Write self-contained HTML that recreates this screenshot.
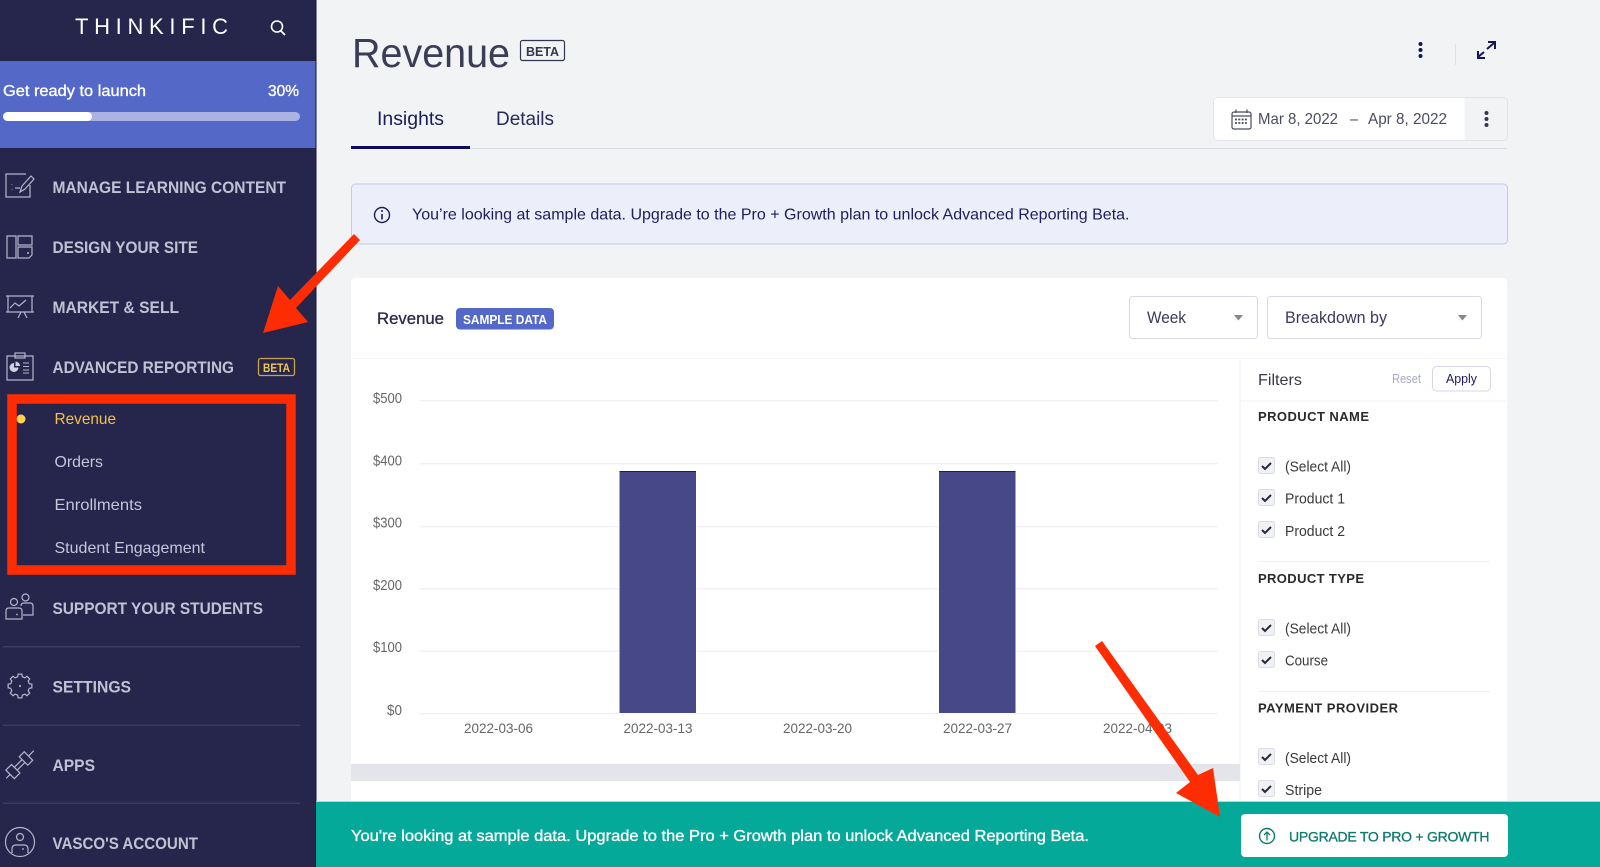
<!DOCTYPE html>
<html lang="en">
<head>
<meta charset="utf-8">
<title>Revenue</title>
<style>
html,body{margin:0;padding:0;width:1600px;height:867px;overflow:hidden;background:#f2f3f5}
svg{display:block}
text{font-family:"Liberation Sans",sans-serif}
.nav{font-size:17px;font-weight:bold;fill:#c0c2d4}
.sub{font-size:16px;fill:#c4c6da}
.cb{font-size:14.5px;fill:#3a3a3a}
.fh{font-size:13px;font-weight:bold;fill:#2a2a2a}
.yl{font-size:14.5px;fill:#666}
.xl{font-size:14px;fill:#666}
.ic{fill:none;stroke:#b4b6ca;stroke-width:1.2}
.box{fill:#f0f1f5;stroke:#dcdde3;stroke-width:1}
.chk{fill:none;stroke:#26283a;stroke-width:2}
</style>
</head>
<body>
<svg width="1600" height="867" viewBox="0 0 1600 867" xmlns="http://www.w3.org/2000/svg">
<rect width="1600" height="867" fill="#f2f3f5"/>

<!-- Sidebar -->
<rect width="316" height="867" fill="#26264c"/>
<rect x="315.500" width="1" height="867" fill="#16163c"/>
<text x="75" y="34" font-size="22" fill="#fff" textLength="153" lengthAdjust="spacing">THINKIFIC</text>
<circle cx="277" cy="26.500" r="5.500" fill="none" stroke="#fff" stroke-width="1.600"/>
<path d="M281 31L285 35" stroke="#fff" stroke-width="1.800" fill="none"/>
<rect y="61" width="315.500" height="87" fill="#5468c8"/>
<text x="3" y="96" font-size="16" fill="#fff" stroke="#fff" stroke-width=".35" textLength="143" lengthAdjust="spacingAndGlyphs">Get ready to launch</text>
<text x="268" y="96" font-size="16" fill="#fff" stroke="#fff" stroke-width=".35" textLength="31" lengthAdjust="spacingAndGlyphs">30%</text>
<rect x="3" y="112" width="297" height="9" rx="4.500" fill="#aab3e2"/>
<rect x="3" y="112" width="89" height="9" rx="4.500" fill="#fff"/>

<path class="ic" d="M26 174H6V197H30V185M12 184.500v.6M12 189.500v.6M15 188H20M20 192L22 186L31 176L34 179L25 189Z"/>
<text class="nav" x="52.500" y="193" textLength="233.500" lengthAdjust="spacingAndGlyphs">MANAGE LEARNING CONTENT</text>
<path class="ic" d="M7 236H16V258H7ZM18 236H32V245H18ZM18 247H32V255L29 258H18Z"/><circle cx="28" cy="253" r="1" fill="#b4b6ca"/>
<text class="nav" x="52.500" y="253" textLength="145.500" lengthAdjust="spacingAndGlyphs">DESIGN YOUR SITE</text>
<path class="ic" d="M6 296H34M8 296V312M32 296V312M6 312H34M18 318L21 312M27 318L24 312M10 308L15 303L19 306L26 300"/>
<text class="nav" x="52.500" y="313" textLength="126.500" lengthAdjust="spacingAndGlyphs">MARKET &amp; SELL</text>
<path class="ic" d="M7 356H33V380H7Z"/><rect class="ic" x="15" y="353" width="10" height="5"/>
<path d="M14 363A4.500 4.500 0 1 0 18.500 367.500H14Z" fill="#d0d2e0"/><path d="M15.500 361.500A4.500 4.500 0 0 1 20 366H15.500Z" fill="#d0d2e0"/><path d="M23 363H29M23 366.500H29M23 370H29M23 373H29" stroke="#b4b6ca" stroke-width="1"/>
<text class="nav" x="52.500" y="373" textLength="181.500" lengthAdjust="spacingAndGlyphs">ADVANCED REPORTING</text>
<rect x="258.500" y="358.500" width="36" height="17" rx="2" fill="none" stroke="#c6a350" stroke-width="1.300"/>
<text x="263" y="372" font-size="11.500" font-weight="bold" fill="#f5c84a" textLength="27" lengthAdjust="spacingAndGlyphs">BETA</text>

<circle cx="21" cy="419" r="4.500" fill="#ffd254"/>
<text x="54.500" y="424" font-size="16" fill="#f2c14e" textLength="61.500" lengthAdjust="spacingAndGlyphs">Revenue</text>
<text class="sub" x="54.500" y="467" textLength="48.500" lengthAdjust="spacingAndGlyphs">Orders</text>
<text class="sub" x="54.500" y="510" textLength="87.500" lengthAdjust="spacingAndGlyphs">Enrollments</text>
<text class="sub" x="54.500" y="553" textLength="150.500" lengthAdjust="spacingAndGlyphs">Student Engagement</text>
<rect x="12" y="399" width="279" height="171" fill="none" stroke="#fe2c02" stroke-width="9.500"/>

<circle class="ic" cx="14" cy="602" r="3.500"/><circle class="ic" cx="25.500" cy="597.500" r="3.500"/>
<path class="ic" d="M6 619V611Q6 608 9 608H19Q22 608 22 611V619ZM21 606Q21 603 24 603H30Q33 603 33 606V615H23"/><circle cx="17" cy="614.500" r=".9" fill="#b4b6ca"/>
<text class="nav" x="52.500" y="614" textLength="210.500" lengthAdjust="spacingAndGlyphs">SUPPORT YOUR STUDENTS</text>
<rect x="3" y="646" width="297" height="1.500" fill="#3b3b62"/>
<g transform="translate(20 686)"><polygon class="ic" points="-2.300,-9.220 -1.880,-11.850 1.880,-11.850 2.300,-9.220 4.890,-8.140 7.050,-9.710 9.710,-7.050 8.140,-4.890 9.220,-2.300 11.850,-1.880 11.850,1.880 9.220,2.300 8.140,4.890 9.710,7.050 7.050,9.710 4.890,8.140 2.300,9.220 1.880,11.850 -1.880,11.850 -2.300,9.220 -4.890,8.140 -7.050,9.710 -9.710,7.050 -8.140,4.890 -9.220,2.300 -11.850,1.880 -11.850,-1.880 -9.220,-2.300 -8.140,-4.890 -9.710,-7.050 -7.050,-9.710 -4.890,-8.140"/><circle r="1" fill="#c8cad8"/></g>
<text class="nav" x="52.500" y="692.500" textLength="78.500" lengthAdjust="spacingAndGlyphs">SETTINGS</text>
<rect x="3" y="724.500" width="297" height="1.500" fill="#3b3b62"/>
<g transform="rotate(-45 20 764.500)"><rect class="ic" x="6" y="758.500" width="8" height="12"/><rect class="ic" x="25" y="758.500" width="7" height="12"/><path class="ic" d="M.5 764.500H6M14 762.500H25M14 766.500H25M32 764.500H39.500"/></g>
<text class="nav" x="52.500" y="771" textLength="42.500" lengthAdjust="spacingAndGlyphs">APPS</text>
<rect x="3" y="802.500" width="297" height="1.500" fill="#3b3b62"/>
<circle class="ic" cx="20" cy="842" r="14.500"/><circle class="ic" cx="20" cy="837" r="3.500"/>
<path class="ic" d="M12 853V849Q12 845 16 845H24Q28 845 28 849V853"/><circle cx="23" cy="849" r=".9" fill="#b4b6ca"/>
<text class="nav" x="52.500" y="849" textLength="145.500" lengthAdjust="spacingAndGlyphs">VASCO'S ACCOUNT</text>

<!-- Header -->
<text x="352" y="67" font-size="41" fill="#3a3d55" textLength="158" lengthAdjust="spacingAndGlyphs">Revenue</text>
<rect x="520.500" y="40.500" width="44" height="20" rx="2" fill="none" stroke="#33364f" stroke-width="1.200"/>
<text x="526" y="56" font-size="12.500" font-weight="bold" fill="#33364f" textLength="33" lengthAdjust="spacingAndGlyphs">BETA</text>
<circle cx="1420.500" cy="44" r="2" fill="#16145e"/><circle cx="1420.500" cy="50" r="2" fill="#16145e"/><circle cx="1420.500" cy="56" r="2" fill="#16145e"/>
<rect x="1455" y="44" width="1" height="21" fill="#e0e1e7"/>
<path d="M1487 49L1494 43M1488 42H1495V49M1484 52L1478 57M1478 51V58H1485" fill="none" stroke="#16145e" stroke-width="2"/>

<text x="377" y="125" font-size="19.500" fill="#1c1c58" textLength="67" lengthAdjust="spacingAndGlyphs">Insights</text>
<text x="496" y="125" font-size="19.500" fill="#2a2a58" textLength="58" lengthAdjust="spacingAndGlyphs">Details</text>
<rect x="351" y="148" width="1156" height="1" fill="#d9dbe5"/>
<rect x="351" y="146" width="119" height="3" fill="#0e0b5e"/>

<rect x="1213.500" y="97.500" width="294" height="43" rx="4" fill="#f2f3f5" stroke="#e3e4ea"/>
<path d="M1217.500 98H1464.500V140H1217.500Q1214 140 1214 136.500V101.500Q1214 98 1217.500 98Z" fill="#fff"/>
<rect x="1232" y="112" width="19" height="17" rx="2" fill="none" stroke="#4a4c60" stroke-width="1.200"/>
<path d="M1232 116H1251M1236 109.500V113M1247 109.500V113" stroke="#4a4c60" stroke-width="1.200" fill="none"/>
<path d="M1235 119.500H1248M1235 123H1248" stroke="#4a4c60" stroke-width="1.800" stroke-dasharray="2 1.300" fill="none"/>
<text x="1258" y="124" font-size="16" fill="#4a4c60" textLength="80" lengthAdjust="spacingAndGlyphs">Mar 8, 2022</text>
<text x="1350" y="124" font-size="16" fill="#4a4c60" textLength="8" lengthAdjust="spacingAndGlyphs">–</text>
<text x="1368" y="124" font-size="16" fill="#4a4c60" textLength="79" lengthAdjust="spacingAndGlyphs">Apr 8, 2022</text>
<circle cx="1486.500" cy="113" r="2" fill="#33364f"/><circle cx="1486.500" cy="119" r="2" fill="#33364f"/><circle cx="1486.500" cy="125" r="2" fill="#33364f"/>

<!-- Banner -->
<rect x="351.500" y="184" width="1156" height="60" rx="4" fill="#eceef9" stroke="#c4c9e8"/>
<circle cx="382" cy="215" r="7.500" fill="none" stroke="#1c1c58" stroke-width="1.400"/>
<path d="M382 214V219.500" stroke="#1c1c58" stroke-width="1.600"/><circle cx="382" cy="211" r="1" fill="#1c1c58"/>
<text x="412" y="219.500" font-size="16" fill="#1e1e5c" textLength="717.500" lengthAdjust="spacingAndGlyphs">You’re looking at sample data. Upgrade to the Pro + Growth plan to unlock Advanced Reporting Beta.</text>

<!-- Card -->
<rect x="351" y="278" width="1156" height="540" rx="4" fill="#fff"/>
<text x="377" y="324" font-size="16.500" fill="#2a2a45" stroke="#2a2a45" stroke-width=".3" textLength="67" lengthAdjust="spacingAndGlyphs">Revenue</text>
<rect x="456" y="308" width="98" height="21.500" rx="4" fill="#5468c8"/>
<text x="463" y="324" font-size="12.500" font-weight="bold" fill="#fff" textLength="84" lengthAdjust="spacingAndGlyphs">SAMPLE DATA</text>

<rect x="1129.500" y="296.500" width="128" height="42" rx="3" fill="#fff" stroke="#d9d9e6"/>
<text x="1147" y="323" font-size="16.500" fill="#3a3a5a" textLength="39" lengthAdjust="spacingAndGlyphs">Week</text>
<path d="M1234 315H1243L1238.500 320.500Z" fill="#888"/>
<rect x="1267.500" y="296.500" width="214" height="42" rx="3" fill="#fff" stroke="#d9d9e6"/>
<text x="1285" y="323" font-size="16.500" fill="#3a3a5a" textLength="102" lengthAdjust="spacingAndGlyphs">Breakdown by</text>
<path d="M1458 315H1467L1462.500 320.500Z" fill="#888"/>

<rect x="351" y="358" width="1156" height="1" fill="#f6f6f8"/>
<rect x="1239.500" y="358" width="1" height="450" fill="#f0f0f3"/>

<!-- Chart -->
<g fill="#f0f0f2">
<rect x="419.500" y="400" width="798" height="1.300"/><rect x="419.500" y="463" width="798" height="1.300"/><rect x="419.500" y="526" width="798" height="1.300"/><rect x="419.500" y="588" width="798" height="1.300"/><rect x="419.500" y="650.500" width="798" height="1.300"/><rect x="419.500" y="713" width="798" height="1.300"/>
</g>
<text class="yl" x="402" y="403" text-anchor="end" textLength="29" lengthAdjust="spacingAndGlyphs">$500</text>
<text class="yl" x="402" y="465.500" text-anchor="end" textLength="29" lengthAdjust="spacingAndGlyphs">$400</text>
<text class="yl" x="402" y="527.500" text-anchor="end" textLength="29" lengthAdjust="spacingAndGlyphs">$300</text>
<text class="yl" x="402" y="590" text-anchor="end" textLength="29" lengthAdjust="spacingAndGlyphs">$200</text>
<text class="yl" x="402" y="652" text-anchor="end" textLength="29" lengthAdjust="spacingAndGlyphs">$100</text>
<text class="yl" x="402" y="715" text-anchor="end" textLength="15" lengthAdjust="spacingAndGlyphs">$0</text>
<rect x="618.500" y="471" width="78.500" height="243" fill="#fff"/><rect x="938" y="471" width="78.500" height="243" fill="#fff"/>
<rect x="619.500" y="471" width="76.500" height="242" fill="#474888"/><rect x="619.500" y="471" width="76.500" height="1" fill="#1a1a70"/>
<rect x="939" y="471" width="76.500" height="242" fill="#474888"/><rect x="939" y="471" width="76.500" height="1" fill="#1a1a70"/>
<text class="xl" x="464" y="733" textLength="69" lengthAdjust="spacingAndGlyphs">2022-03-06</text>
<text class="xl" x="623.500" y="733" textLength="69" lengthAdjust="spacingAndGlyphs">2022-03-13</text>
<text class="xl" x="783" y="733" textLength="69" lengthAdjust="spacingAndGlyphs">2022-03-20</text>
<text class="xl" x="943" y="733" textLength="69" lengthAdjust="spacingAndGlyphs">2022-03-27</text>
<text class="xl" x="1103" y="733" textLength="69" lengthAdjust="spacingAndGlyphs">2022-04-03</text>
<rect x="351" y="764" width="889" height="17" fill="#e4e5eb"/>

<!-- Filters -->
<text x="1258" y="385" font-size="16" fill="#3a3a45" textLength="44" lengthAdjust="spacingAndGlyphs">Filters</text>
<text x="1392" y="383" font-size="13" fill="#a9a9c9" textLength="29" lengthAdjust="spacingAndGlyphs">Reset</text>
<rect x="1432.500" y="366.500" width="58" height="24.500" rx="4" fill="#fff" stroke="#d5d6e8"/>
<text x="1446" y="383" font-size="13" fill="#1a1a66" textLength="31" lengthAdjust="spacingAndGlyphs">Apply</text>
<rect x="1240" y="400.500" width="267" height="1" fill="#f1f1f4"/>

<text class="fh" x="1258" y="421" textLength="111" lengthAdjust="spacing">PRODUCT NAME</text>
<rect class="box" x="1258.500" y="457.500" width="16" height="16" rx="2"/><path class="chk" d="M1262 466L1265 469L1271 463"/>
<text class="cb" x="1285" y="471.500" textLength="66" lengthAdjust="spacingAndGlyphs">(Select All)</text>
<rect class="box" x="1258.500" y="489.500" width="16" height="16" rx="2"/><path class="chk" d="M1262 498L1265 501L1271 495"/>
<text class="cb" x="1285" y="503.500" textLength="60" lengthAdjust="spacingAndGlyphs">Product 1</text>
<rect class="box" x="1258.500" y="521.500" width="16" height="16" rx="2"/><path class="chk" d="M1262 530L1265 533L1271 527"/>
<text class="cb" x="1285" y="536" textLength="60" lengthAdjust="spacingAndGlyphs">Product 2</text>
<rect x="1258" y="561" width="232" height="1" fill="#f1f1f4"/>

<text class="fh" x="1258" y="583" textLength="106" lengthAdjust="spacing">PRODUCT TYPE</text>
<rect class="box" x="1258.500" y="619.500" width="16" height="16" rx="2"/><path class="chk" d="M1262 628L1265 631L1271 625"/>
<text class="cb" x="1285" y="633.500" textLength="66" lengthAdjust="spacingAndGlyphs">(Select All)</text>
<rect class="box" x="1258.500" y="651.500" width="16" height="16" rx="2"/><path class="chk" d="M1262 660L1265 663L1271 657"/>
<text class="cb" x="1285" y="665.500" textLength="43" lengthAdjust="spacingAndGlyphs">Course</text>
<rect x="1258" y="691" width="232" height="1" fill="#f1f1f4"/>

<text class="fh" x="1258" y="712.500" textLength="140" lengthAdjust="spacing">PAYMENT PROVIDER</text>
<rect class="box" x="1258.500" y="748.500" width="16" height="16" rx="2"/><path class="chk" d="M1262 757L1265 760L1271 754"/>
<text class="cb" x="1285" y="763" textLength="66" lengthAdjust="spacingAndGlyphs">(Select All)</text>
<rect class="box" x="1258.500" y="780.500" width="16" height="16" rx="2"/><path class="chk" d="M1262 789L1265 792L1271 786"/>
<text class="cb" x="1285" y="795" textLength="37" lengthAdjust="spacingAndGlyphs">Stripe</text>

<!-- Upgrade bar -->
<rect x="316" y="801" width="1284" height="66" fill="#05a999"/>
<rect x="316" y="801" width="1284" height="1" fill="#a8dcd5"/>
<text x="351" y="841" font-size="16" fill="#fff" stroke="#fff" stroke-width=".35" textLength="738" lengthAdjust="spacingAndGlyphs">You're looking at sample data. Upgrade to the Pro + Growth plan to unlock Advanced Reporting Beta.</text>
<rect x="1241" y="814" width="267" height="43" rx="4" fill="#fff"/>
<circle cx="1267" cy="836" r="7.500" fill="none" stroke="#0f7a6c" stroke-width="1.400"/>
<path d="M1267 840.500V832M1264 835L1267 832L1270 835" fill="none" stroke="#0f7a6c" stroke-width="1.300"/>
<text x="1289" y="841.500" font-size="14" fill="#0f7a6c" stroke="#0f7a6c" stroke-width=".3" textLength="200.500" lengthAdjust="spacing">UPGRADE TO PRO + GROWTH</text>

<!-- Red arrows -->
<path d="M354 234L360 240L296 308L308 322L263 333L278 286L290 300Z" fill="#fe2c02"/>
<path d="M1095 646L1102 641L1198 775L1213 768L1220 817L1176 793L1190 782Z" fill="#fe2c02"/>
</svg>
</body>
</html>
